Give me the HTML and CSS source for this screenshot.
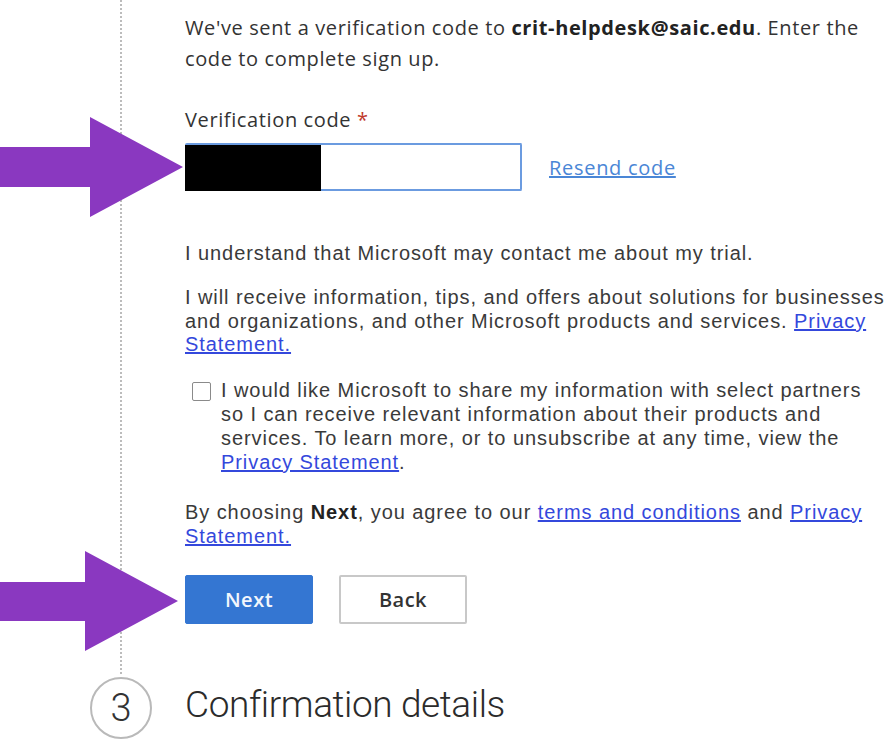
FILE: index.html
```html
<!DOCTYPE html>
<html lang="en">
<head>
    <meta charset="UTF-8">
    <title>Verify email</title>
    <link rel="stylesheet" href="styles.css">
</head>
<body>
    <div class="signup">
        <section class="step step-current">
            <div class="rail"></div>
            <div class="step-body">
                <p class="intro">
                    We've sent a verification code to <strong>crit-helpdesk@saic.edu</strong>. Enter the<br>
                    code to complete sign up.
                </p>

                <label class="field-label">Verification code <span class="required">*</span></label>
                <div class="field-row">
                    <div class="code-input">
                        <span class="redacted"></span>
                    </div>
                    <a href="#" class="resend">Resend code</a>
                </div>

                <p class="legal first">I understand that Microsoft may contact me about my trial.</p>

                <p class="legal">
                    I will receive information, tips, and offers about solutions for businesses<br>
                    and organizations, and other Microsoft products and services. <a href="#">Privacy<br>
                    Statement.</a>
                </p>

                <div class="consent">
                    <span class="checkbox"></span>
                    <p class="legal">
                        I would like Microsoft to share my information with select partners<br>
                        so I can receive relevant information about their products and<br>
                        services. To learn more, or to unsubscribe at any time, view the<br>
                        <a href="#">Privacy Statement</a>.
                    </p>
                </div>

                <p class="legal terms">
                    By choosing <strong>Next</strong>, you agree to our <a href="#">terms and conditions</a> and <a href="#">Privacy<br>
                    Statement.</a>
                </p>

                <div class="actions">
                    <button class="btn btn-primary">Next</button>
                    <button class="btn btn-secondary">Back</button>
                </div>
            </div>
        </section>

        <section class="step step-next">
            <div class="step-number">3</div>
            <h2>Confirmation details</h2>
        </section>
    </div>

    <!-- annotation arrows -->
    <svg class="pointer pointer-code" width="184" height="100" viewBox="0 0 184 100">
        <polygon points="0,30 90,30 90,0 183,50 90,100 90,70 0,70" />
    </svg>
    <svg class="pointer pointer-next" width="180" height="100" viewBox="0 0 180 100">
        <polygon points="0,31 85,31 85,0 178,50 85,100 85,70 0,70" />
    </svg>
</body>
</html>
```

FILE: styles.css
```css
* {
    margin: 0;
    padding: 0;
    box-sizing: border-box;
}

body {
    font-family: 'Open Sans', 'Noto Sans', sans-serif;
    background: #ffffff;
    color: #333333;
    width: 888px;
    height: 744px;
    overflow: hidden;
    position: relative;
}

.step {
    display: flex;
}

.step-current {
    padding-bottom: 53px;
}

.rail {
    width: 185px;
    flex-shrink: 0;
    position: relative;
}

.rail::before {
    content: "";
    position: absolute;
    left: 120px;
    top: 0;
    bottom: -50px;
    border-left: 2px dotted #bcbcbc;
}

.step-body {
    padding-top: 12px;
    width: 703px;
    flex-shrink: 0;
}

.intro {
    font-size: 20px;
    line-height: 31px;
    color: #333;
    letter-spacing: 0.62px;
}

.intro strong {
    font-weight: 700;
    color: #222;
}

.field-label {
    display: block;
    margin-top: 33px;
    font-size: 20px;
    line-height: 26px;
    color: #333;
    letter-spacing: 0.62px;
}

.required {
    color: #c0392b;
}

.field-row {
    display: flex;
    align-items: center;
    margin-top: 10px;
}

.code-input {
    width: 337px;
    height: 48px;
    border: 2px solid #6b9be0;
    border-left: none;
    border-radius: 2px;
    background: #fff;
}

.redacted {
    display: block;
    width: 136px;
    height: 46px;
    background: #000;
}

.resend {
    margin-left: 27px;
    font-size: 20px;
    color: #4a86d6;
    text-decoration: underline;
    letter-spacing: 0.7px;
}

.legal {
    font-family: 'Liberation Sans', Arial, sans-serif;
    font-size: 20px;
    line-height: 23.5px;
    letter-spacing: 0.93px;
    color: #3a3a3a;
    margin-top: 21px;
    white-space: nowrap;
}

.legal.first {
    margin-top: 50px;
    line-height: 24px;
}

.legal a {
    color: #3448dc;
    text-decoration: underline;
}

.legal strong {
    color: #222;
}

.consent {
    display: flex;
    gap: 10px;
    margin-left: 7px;
}

.consent .legal {
    line-height: 24px;
    margin-top: 21px;
}

.checkbox {
    width: 19px;
    height: 19px;
    margin-top: 25px;
    border: 1.5px solid #8a8a8a;
    border-radius: 2px;
    flex-shrink: 0;
}

.legal.terms {
    margin-top: 26px;
    line-height: 24px;
}

.actions {
    display: flex;
    gap: 26px;
    margin-top: 27px;
}

.btn {
    width: 128px;
    height: 49px;
    font-family: 'Open Sans', 'Noto Sans', sans-serif;
    font-size: 20px;
    font-weight: 600;
    letter-spacing: 0.5px;
    border-radius: 2px;
    cursor: pointer;
}

.btn-primary {
    background: #3476d2;
    color: #f2f6fc;
    border: 1px solid #3476d2;
}

.btn-secondary {
    background: #fff;
    color: #333;
    border: 2px solid #c8c8c8;
}

.step-next {
    align-items: center;
    height: 62px;
}

.step-number {
    width: 62px;
    height: 62px;
    margin-left: 90px;
    margin-right: 33px;
    border: 2px solid #b9b9b9;
    border-radius: 50%;
    display: flex;
    align-items: center;
    justify-content: center;
    font-family: 'Roboto', 'Liberation Sans', sans-serif;
    font-weight: 300;
    font-size: 38px;
    color: #333;
}

.step-next h2 {
    font-family: 'Roboto', 'Liberation Sans', sans-serif;
    font-weight: 300;
    font-size: 37px;
    letter-spacing: -0.4px;
    color: #2b2b2b;
    margin-top: -6px;
}

.pointer {
    position: absolute;
    left: 0;
}

.pointer polygon {
    fill: #8a38c0;
}

.pointer-code {
    top: 117px;
}

.pointer-next {
    top: 551px;
}
```
